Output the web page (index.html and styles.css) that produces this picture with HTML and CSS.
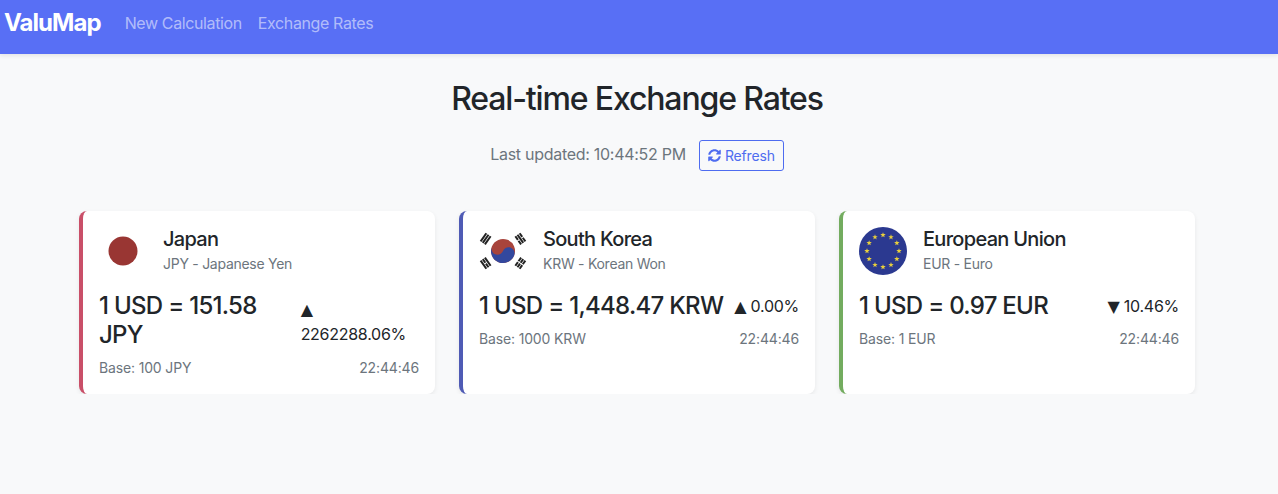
FILE: index.html
```html
<!DOCTYPE html>
<html lang="en">
<head>
  <meta charset="UTF-8">
  <meta name="viewport" content="width=device-width, initial-scale=1.0">
  <title>Real-time Exchange Rates</title>
  <link rel="stylesheet" href="styles.css">
</head>
<body>
  <nav class="navbar">
    <a class="brand" href="#">ValuMap</a>
    <a class="nav-link" href="#">New Calculation</a>
    <a class="nav-link" href="#">Exchange Rates</a>
  </nav>

  <main class="container">
    <h1>Real-time Exchange Rates</h1>
    <div class="status">
      <span class="updated">Last updated: 10:44:52 PM</span>
      <button class="refresh" type="button">
        <svg class="refresh-icon" viewBox="0 0 512 512" aria-hidden="true"><path fill="currentColor" d="M370.72 133.28C339.458 104.008 298.888 87.962 255.848 88c-77.458.068-144.328 53.178-162.791 126.85-1.344 5.363-6.122 9.15-11.651 9.15H24.103c-7.498 0-13.194-6.807-11.807-14.176C33.933 94.924 134.813 8 256 8c66.448 0 126.791 26.136 171.315 68.685L463.03 40.97C478.149 25.851 504 36.559 504 57.941V192c0 13.255-10.745 24-24 24H345.941c-21.382 0-32.09-25.851-16.971-40.971l41.75-41.749zM32 296h134.059c21.382 0 32.09 25.851 16.971 40.971l-41.75 41.75c31.262 29.273 71.835 45.319 114.876 45.28 77.418-.07 144.315-53.144 162.787-126.849 1.344-5.363 6.122-9.15 11.651-9.15h57.304c7.498 0 13.194 6.807 11.807 14.176C478.067 417.076 377.187 504 256 504c-66.448 0-126.791-26.136-171.315-68.685L48.97 471.03C33.851 486.149 8 475.441 8 454.059V320c0-13.255 10.745-24 24-24z"/></svg>
        Refresh
      </button>
    </div>

    <div class="cards">
      <section class="card card-jpy">
        <div class="card-head">
          <svg class="flag" viewBox="0 0 48 48" aria-hidden="true">
            <circle cx="24" cy="24" r="14.5" fill="#993633"/>
          </svg>
          <div>
            <div class="country">Japan</div>
            <div class="currency">JPY - Japanese Yen</div>
          </div>
        </div>
        <div class="rate-row">
          <div class="rate">1 USD = 151.58 JPY</div>
          <div class="change"><span class="arrow">▲</span> 2262288.06%</div>
        </div>
        <div class="card-foot">
          <span>Base: 100 JPY</span>
          <span>22:44:46</span>
        </div>
      </section>

      <section class="card card-krw">
        <div class="card-head">
          <svg class="flag" viewBox="0 0 48 48" aria-hidden="true">
            <g fill="#222">
              <g transform="rotate(-55 24 24)">
                <rect x="19" y="-0.800" width="10" height="2"/>
                <rect x="19" y="1.800" width="10" height="2"/>
                <rect x="19" y="4.400" width="10" height="2"/>
              </g>
              <g transform="rotate(55 24 24)">
                <rect x="19" y="-0.800" width="4.500" height="2"/>
                <rect x="24.500" y="-0.800" width="4.500" height="2"/>
                <rect x="19" y="1.800" width="10" height="2"/>
                <rect x="19" y="4.400" width="4.500" height="2"/>
                <rect x="24.500" y="4.400" width="4.500" height="2"/>
              </g>
              <g transform="rotate(125 24 24)">
                <rect x="19" y="-0.800" width="4.500" height="2"/>
                <rect x="24.500" y="-0.800" width="4.500" height="2"/>
                <rect x="19" y="1.800" width="4.500" height="2"/>
                <rect x="24.500" y="1.800" width="4.500" height="2"/>
                <rect x="19" y="4.400" width="4.500" height="2"/>
                <rect x="24.500" y="4.400" width="4.500" height="2"/>
              </g>
              <g transform="rotate(-125 24 24)">
                <rect x="19" y="-0.800" width="10" height="2"/>
                <rect x="19" y="1.800" width="4.500" height="2"/>
                <rect x="24.500" y="1.800" width="4.500" height="2"/>
                <rect x="19" y="4.400" width="10" height="2"/>
              </g>
            </g>
            <g transform="rotate(22 24 24)">
              <circle cx="24" cy="24" r="12" fill="#a8443c"/>
              <path fill="#33489e" d="M12 24a12 12 0 0 0 24 0c0-3.300-2.700-6-6-6s-6 2.700-6 6-2.700 6-6 6-6-2.700-6-6z"/>
            </g>
          </svg>
          <div>
            <div class="country">South Korea</div>
            <div class="currency">KRW - Korean Won</div>
          </div>
        </div>
        <div class="rate-row">
          <div class="rate">1 USD = 1,448.47 KRW</div>
          <div class="change"><span class="arrow">▲</span> 0.00%</div>
        </div>
        <div class="card-foot">
          <span>Base: 1000 KRW</span>
          <span>22:44:46</span>
        </div>
      </section>

      <section class="card card-eur">
        <div class="card-head">
          <svg class="flag" viewBox="0 0 48 48" aria-hidden="true">
            <defs>
              <polygon id="star" fill="#e8cf3c" points="0,-2.800 .7,-.9 2.700,-.9 1.100,.4 1.700,2.300 0,1.200 -1.700,2.300 -1.100,.4 -2.700,-.9 -.7,-.9"/>
            </defs>
            <circle cx="24" cy="24" r="24" fill="#2b3990"/>
            <use href="#star" x="24" y="8"/>
            <use href="#star" x="32" y="10.140"/>
            <use href="#star" x="37.860" y="16"/>
            <use href="#star" x="40" y="24"/>
            <use href="#star" x="37.860" y="32"/>
            <use href="#star" x="32" y="37.860"/>
            <use href="#star" x="24" y="40"/>
            <use href="#star" x="16" y="37.860"/>
            <use href="#star" x="10.140" y="32"/>
            <use href="#star" x="8" y="24"/>
            <use href="#star" x="10.140" y="16"/>
            <use href="#star" x="16" y="10.140"/>
          </svg>
          <div>
            <div class="country">European Union</div>
            <div class="currency">EUR - Euro</div>
          </div>
        </div>
        <div class="rate-row">
          <div class="rate">1 USD = 0.97 EUR</div>
          <div class="change"><span class="arrow">▼</span> 10.46%</div>
        </div>
        <div class="card-foot">
          <span>Base: 1 EUR</span>
          <span>22:44:46</span>
        </div>
      </section>
    </div>
  </main>
</body>
</html>
```

FILE: styles.css
```css
* {
  box-sizing: border-box;
}

body {
  margin: 0;
  background-color: #f8f9fa;
  color: #212529;
  font-family: 'Inter', 'Liberation Sans', sans-serif;
  font-size: 16px;
  line-height: 1.5;
}

.navbar {
  display: flex;
  align-items: center;
  height: 54px;
  padding: 0 4px 8px;
  background-color: #586ff5;
  box-shadow: 0 2px 4px rgba(0, 0, 0, 0.08);
}

.brand {
  margin-right: 24px;
  color: #ffffff;
  font-size: 24px;
  font-weight: 700;
  letter-spacing: -0.95px;
  text-decoration: none;
}

.nav-link {
  margin-right: 16px;
  color: rgba(255, 255, 255, 0.55);
  letter-spacing: -0.38px;
  text-decoration: none;
}

.container {
  padding: 24px 83px 0 79px;
}

h1 {
  margin: 2px 0 22px;
  font-size: 32px;
  font-weight: 500;
  letter-spacing: -1.15px;
  line-height: 1.2;
  text-align: center;
}

.status {
  display: flex;
  justify-content: center;
  align-items: center;
  gap: 13px;
  margin-bottom: 40px;
}

.updated {
  margin-bottom: 4px;
  color: #6c757d;
  letter-spacing: -0.28px;
}

.refresh {
  display: flex;
  align-items: center;
  gap: 4px;
  height: 31px;
  padding: 0 8px;
  background: transparent;
  color: #4e6cf0;
  border: 1px solid #4e6cf0;
  border-radius: 3px;
  font-family: inherit;
  font-size: 14px;
  letter-spacing: -0.15px;
  cursor: pointer;
}

.refresh-icon {
  width: 13px;
  height: 13px;
}

.cards {
  display: grid;
  grid-template-columns: repeat(3, 1fr);
  gap: 24px;
}

.card {
  display: flex;
  flex-direction: column;
  height: 183px;
  padding: 16px;
  background-color: #ffffff;
  border-left: 4px solid;
  border-radius: 8px;
  box-shadow: 0 2px 5px rgba(0, 0, 0, 0.07);
}

.card-jpy {
  border-left-color: #c94f68;
}

.card-krw {
  border-left-color: #4f5bb5;
}

.card-eur {
  border-left-color: #73ac5f;
}

.card-head {
  display: flex;
  align-items: flex-start;
  gap: 16px;
  margin-bottom: 17px;
}

.flag {
  flex: none;
  width: 48px;
  height: 48px;
  overflow: visible;
}

.country {
  font-size: 20px;
  font-weight: 500;
  letter-spacing: -0.7px;
  line-height: 1.2;
  margin-bottom: 2px;
}

.currency {
  color: #6c757d;
  font-size: 14px;
  letter-spacing: -0.27px;
}

.rate-row {
  display: flex;
  justify-content: space-between;
  align-items: center;
  margin-bottom: 7px;
}

.rate {
  font-size: 24px;
  font-weight: 500;
  letter-spacing: -0.7px;
  line-height: 1.2;
}

.change {
  font-size: 16px;
  letter-spacing: -0.27px;
}

.arrow {
  font-family: 'DejaVu Sans', sans-serif;
  font-size: 16px;
}

.card-foot {
  display: flex;
  justify-content: space-between;
  color: #6c757d;
  font-size: 14px;
  letter-spacing: -0.15px;
}
```
